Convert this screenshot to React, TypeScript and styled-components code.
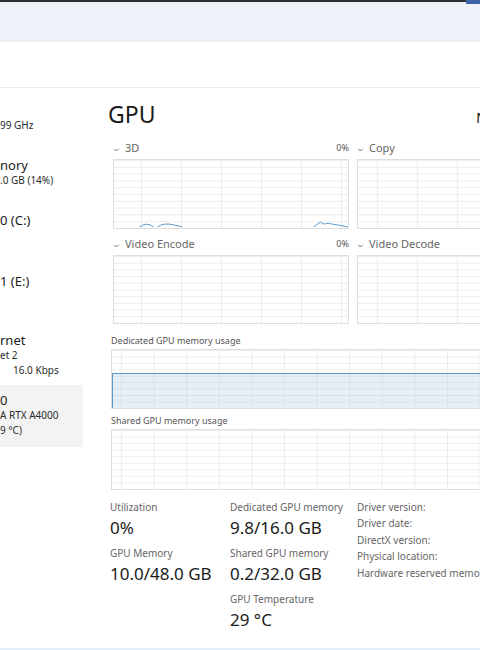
import { createGlobalStyle, styled } from "styled-components";

const GlobalStyle = createGlobalStyle`
    html, body {
        margin: 0;
        padding: 0;
        background: #ffffff;
    }
    * {
        box-sizing: border-box;
    }
`;

const Window = styled.div`
    width: 480px;
    height: 650px;
    overflow: hidden;
    display: flex;
    flex-direction: column;
    font-family: "Noto Sans", "Open Sans", sans-serif;
    color: #1b1b1b;
    background: #ffffff;
`;

const TitleBar = styled.div`
    height: 42px;
    flex-shrink: 0;
    background: #eef2f8;
    border-top: 2px solid #2e2e2e;
    position: relative;
`;

const WinAccent = styled.div`
    position: absolute;
    right: 0;
    top: -2px;
    width: 14px;
    height: 4px;
    background: #3d64a8;
`;

const Toolbar = styled.div`
    height: 46px;
    flex-shrink: 0;
    border-bottom: 1px solid #ebebeb;
`;

const Body = styled.div`
    flex: 1;
    display: flex;
    min-height: 0;
`;

const Sidebar = styled.div`
    width: 83px;
    flex-shrink: 0;
    padding-top: 7px;
    display: flex;
    flex-direction: column;
`;

const NavItem = styled.div<{ $h: number; $active?: boolean }>`
    height: ${p => p.$h}px;
    padding-top: 7px;
    background: ${p => (p.$active ? "#f3f3f3" : "transparent")};
    white-space: nowrap;
    overflow: hidden;
`;

const NavTitle = styled.div`
    font-size: 13px;
    line-height: 16px;
    color: #1b1b1b;
`;

const NavSub = styled.div<{ $indent?: number }>`
    font-size: 10px;
    line-height: 15px;
    color: #2b2b2b;
    padding-left: ${p => p.$indent ?? 0}px;
`;

const Main = styled.div`
    flex: 1;
    padding-left: 25px;
    overflow: hidden;
    min-width: 0;
`;

const Inner = styled.div`
    width: 480px;
`;

const Header = styled.div`
    display: flex;
    align-items: baseline;
    height: 51px;
    padding-top: 12px;
`;

const PageTitle = styled.h1`
    margin: 0;
    font-size: 23px;
    line-height: 28px;
    font-weight: 400;
    color: #1a1a1a;
    width: 368px;
    flex-shrink: 0;
`;

const DeviceName = styled.div`
    font-size: 15px;
    color: #1a1a1a;
    white-space: nowrap;
`;

const EngineGrid = styled.div`
    display: grid;
    grid-template-columns: 236px 236px;
    column-gap: 8px;
    row-gap: 6px;
    margin-left: 5px;
`;

const EngineCell = styled.div`
    display: flex;
    flex-direction: column;
`;

const EngineHead = styled.div`
    display: flex;
    align-items: center;
    justify-content: space-between;
    height: 16px;
    margin-bottom: 4px;
    color: #666666;
`;

const EngineLabel = styled.span`
    display: flex;
    align-items: center;
    gap: 4px;
    font-size: 11px;
`;

const Chevron = styled.span`
    font-size: 9px;
    color: #8a8a8a;
    transform: scaleX(1.4);
`;

const Percent = styled.span`
    font-size: 9px;
    color: #555555;
`;

const Chart = styled.div<{ $h: number; $step: number; $offset: number; $rows: number }>`
    position: relative;
    height: ${p => p.$h}px;
    border: 1px solid #dedede;
    background-color: #ffffff;
    background-image:
        linear-gradient(to right, #ececec 1px, transparent 1px),
        linear-gradient(to bottom, #ececec 1px, transparent 1px);
    background-size: ${p => p.$step}px 100%, 100% ${p => (p.$h - 2) / p.$rows}px;
    background-position: ${p => p.$offset}px 0, 0 0;
    overflow: hidden;
`;

const Graph = styled.svg`
    position: absolute;
    left: 0;
    top: 0;
    width: 100%;
    height: 100%;
`;

const MemLabel = styled.div<{ $top: number }>`
    font-size: 9px;
    line-height: 12px;
    color: #555555;
    margin: ${p => p.$top}px 0 2px 3px;
`;

const MemChart = styled.div`
    margin-left: 3px;
`;

const Fill = styled.div<{ $top: number }>`
    position: absolute;
    left: 0;
    right: 0;
    bottom: 0;
    top: ${p => p.$top}px;
    background: rgba(180, 210, 235, 0.35);
    border-top: 1px solid #5b97c7;
    border-left: 1px solid #5b97c7;
`;

const Stats = styled.div`
    display: grid;
    grid-template-columns: 120px 127px 1fr;
    margin-top: 10px;
    margin-left: 2px;
`;

const StatCol = styled.div`
    display: flex;
    flex-direction: column;
`;

const StatLabel = styled.div`
    font-size: 10px;
    line-height: 14px;
    color: #666666;
    margin-top: 4px;
    white-space: nowrap;
    &:first-child {
        margin-top: 0;
    }
`;

const StatValue = styled.div`
    font-size: 17px;
    line-height: 28px;
    color: #1b1b1b;
    white-space: nowrap;
`;

const InfoCol = styled.div`
    display: flex;
    flex-direction: column;
    margin-top: -1px;
`;

const InfoLine = styled.div`
    font-size: 10px;
    line-height: 16.4px;
    color: #666666;
    white-space: nowrap;
`;

const FooterLine = styled.div`
    height: 2px;
    flex-shrink: 0;
    background: #e4f0fa;
`;

const nav = [
    { h: 55, title: "", subs: [{ t: "99 GHz" }] },
    { h: 55, title: "nory", subs: [{ t: ".0 GB (14%)" }] },
    { h: 61, title: "0 (C:)", subs: [] },
    { h: 59, title: "1 (E:)", subs: [] },
    { h: 60, title: "rnet", subs: [{ t: "et 2" }, { t: "16.0 Kbps", i: 13 }] },
    { h: 62, title: "0", subs: [{ t: "A RTX A4000" }, { t: "9 °C)" }], active: true },
];

const engines = [
    { name: "3D", pct: "0%", wave: true },
    { name: "Copy", pct: "" },
    { name: "Video Encode", pct: "0%" },
    { name: "Video Decode", pct: "" },
];

function App() {
    return (
        <Window>
            <GlobalStyle />
            <TitleBar>
                <WinAccent />
            </TitleBar>
            <Toolbar />
            <Body>
                <Sidebar>
                    {nav.map((n, idx) => (
                        <NavItem key={idx} $h={n.h} $active={n.active}>
                            <NavTitle>{n.title || "\u00a0"}</NavTitle>
                            {n.subs.map((s, j) => (
                                <NavSub key={j} $indent={s.i}>{s.t}</NavSub>
                            ))}
                        </NavItem>
                    ))}
                </Sidebar>
                <Main>
                    <Inner>
                        <Header>
                            <PageTitle>GPU</PageTitle>
                            <DeviceName>NVIDIA RTX A4000</DeviceName>
                        </Header>
                        <EngineGrid>
                            {engines.map((e, idx) => (
                                <EngineCell key={e.name}>
                                    <EngineHead>
                                        <EngineLabel>
                                            <Chevron>⌄</Chevron>
                                            {e.name}
                                        </EngineLabel>
                                        <Percent>{e.pct}</Percent>
                                    </EngineHead>
                                    <Chart $h={idx < 2 ? 70 : 69} $step={40} $offset={idx % 2 ? 19 : 27} $rows={10}>
                                        {e.wave && (
                                            <Graph viewBox="0 0 236 70" preserveAspectRatio="none">
                                                <polyline
                                                    fill="none"
                                                    stroke="#5b97c7"
                                                    strokeWidth="1"
                                                    points="26,69 29,67 33,66 37,67 40,69"
                                                />
                                                <polyline
                                                    fill="none"
                                                    stroke="#5b97c7"
                                                    strokeWidth="1"
                                                    points="44,69 47,67 51,66 56,66 61,67 66,68 69,69"
                                                />
                                                <polyline
                                                    fill="none"
                                                    stroke="#5b97c7"
                                                    strokeWidth="1"
                                                    points="201,69 204,67 208,64 212,66 216,65 220,66 226,67 232,68 236,69"
                                                />
                                            </Graph>
                                        )}
                                    </Chart>
                                </EngineCell>
                            ))}
                        </EngineGrid>
                        <MemLabel $top={11}>Dedicated GPU memory usage</MemLabel>
                        <MemChart>
                            <Chart $h={60} $step={32.6} $offset={9} $rows={9}>
                                <Fill $top={23} />
                            </Chart>
                        </MemChart>
                        <MemLabel $top={6}>Shared GPU memory usage</MemLabel>
                        <MemChart>
                            <Chart $h={61} $step={32.6} $offset={9} $rows={9} />
                        </MemChart>
                        <Stats>
                            <StatCol>
                                <StatLabel>Utilization</StatLabel>
                                <StatValue>0%</StatValue>
                                <StatLabel>GPU Memory</StatLabel>
                                <StatValue>10.0/48.0 GB</StatValue>
                            </StatCol>
                            <StatCol>
                                <StatLabel>Dedicated GPU memory</StatLabel>
                                <StatValue>9.8/16.0 GB</StatValue>
                                <StatLabel>Shared GPU memory</StatLabel>
                                <StatValue>0.2/32.0 GB</StatValue>
                                <StatLabel>GPU Temperature</StatLabel>
                                <StatValue>29 °C</StatValue>
                            </StatCol>
                            <InfoCol>
                                <InfoLine>Driver version:</InfoLine>
                                <InfoLine>Driver date:</InfoLine>
                                <InfoLine>DirectX version:</InfoLine>
                                <InfoLine>Physical location:</InfoLine>
                                <InfoLine>Hardware reserved memory:</InfoLine>
                            </InfoCol>
                        </Stats>
                    </Inner>
                </Main>
            </Body>
            <FooterLine />
        </Window>
    );
}

export default App;
